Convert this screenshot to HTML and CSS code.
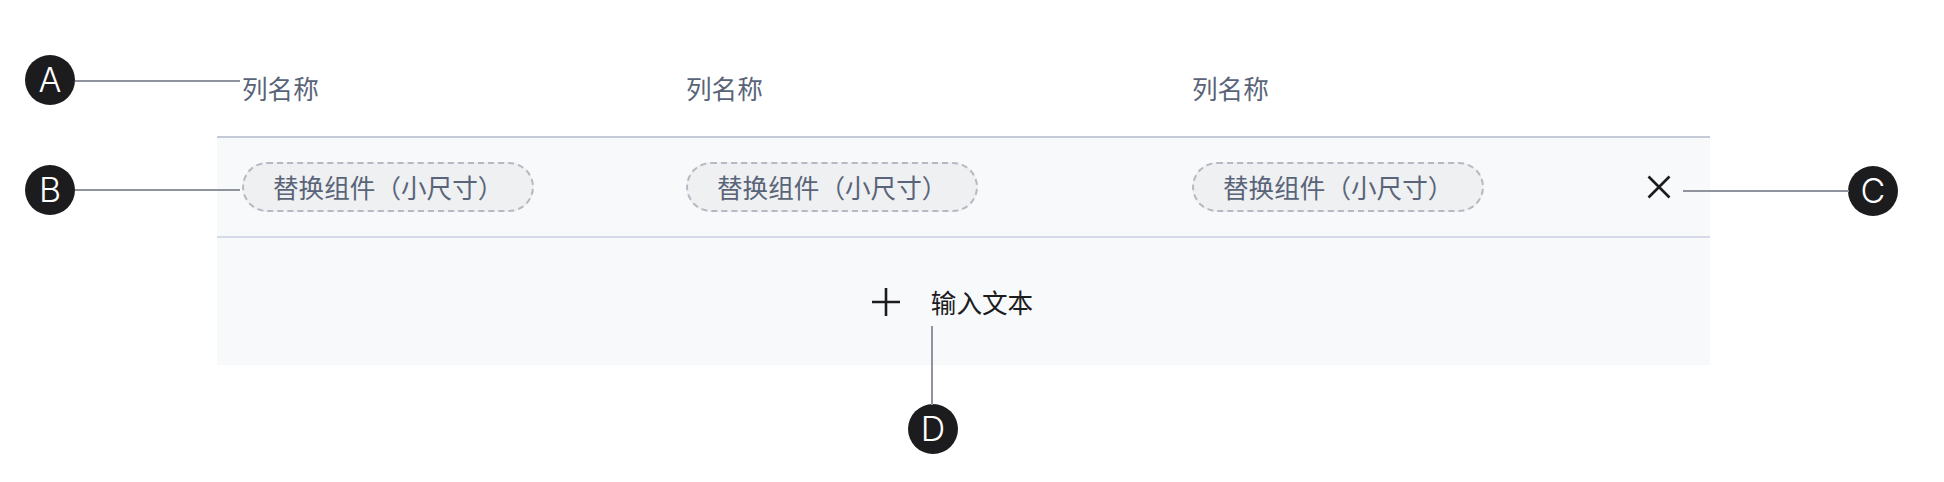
FILE: index.html
```html
<!DOCTYPE html>
<html lang="zh-CN">
<head>
<meta charset="utf-8">
<title>Table spec</title>
<link rel="stylesheet" href="styles.css">
</head>
<body>
<div class="stage">
  <div class="table">
    <div class="row head">
      <div class="cell">列名称</div>
      <div class="cell">列名称</div>
      <div class="cell">列名称</div>
      <div class="cell"></div>
    </div>
    <div class="row body">
      <div class="cell"><span class="pill">替换组件（小尺寸）</span></div>
      <div class="cell"><span class="pill">替换组件（小尺寸）</span></div>
      <div class="cell"><span class="pill">替换组件（小尺寸）</span></div>
      <div class="cell close">
        <svg width="24" height="24" viewBox="0 0 24 24"><path d="M1.5 1.5 L22.5 22.5 M22.5 1.5 L1.5 22.5" stroke="#1c1c1e" stroke-width="2.6" fill="none"/></svg>
      </div>
    </div>
    <div class="add">
      <svg class="plus" width="28" height="28" viewBox="0 0 28 28"><path d="M14 0 V28 M0 14 H28" stroke="#1c1c1e" stroke-width="2.6" fill="none"/></svg>
      <span class="add-text">输入文本</span>
    </div>
  </div>

  <div class="mark mark-a">A</div>
  <div class="line line-a"></div>
  <div class="mark mark-b">B</div>
  <div class="line line-b"></div>
  <div class="mark mark-c">C</div>
  <div class="line line-c"></div>
  <div class="mark mark-d">D</div>
  <div class="line line-d"></div>
</div>
</body>
</html>
```
FILE: styles.css
```css
html, body {
  margin: 0;
  padding: 0;
  background: #ffffff;
}
body {
  font-family: "Noto Sans CJK SC", "Noto Sans", sans-serif;
}
.stage {
  position: relative;
  width: 1944px;
  height: 482px;
  overflow: hidden;
}
.table {
  margin-left: 217px;
  width: 1493px;
}
.row {
  display: grid;
  grid-template-columns: 444px 506px 456px 62px;
  padding-left: 25px;
  box-sizing: border-box;
}
.head {
  height: 136px;
  align-items: end;
  padding-bottom: 30px;
}
.head .cell {
  font-size: 25.6px;
  line-height: 36px;
  color: #5a6479;
}
.body {
  background: #f8f9fb;
  border-top: 2px solid #c6cad7;
  border-bottom: 2px solid #d6d9e7;
  height: 102px;
  align-items: center;
}
.pill {
  display: inline-flex;
  align-items: center;
  box-sizing: border-box;
  height: 50px;
  padding: 0 29px;
  border: 2px dashed #b5b9c3;
  border-radius: 25px;
  background: #eef0f1;
  font-size: 25.6px;
  color: #5a6479;
  line-height: 1;
}
.close {
  display: flex;
  align-items: center;
  margin-left: -1px;
}
.close svg {
  display: block;
}
.add {
  height: 127px;
  background: #f8f9fb;
  display: flex;
  align-items: center;
  justify-content: center;
  padding-right: 22px;
  box-sizing: border-box;
}
.plus {
  display: block;
  margin-right: 31px;
}
.add-text {
  font-size: 25.6px;
  color: #1c1c1e;
  line-height: 1;
}
.mark {
  position: absolute;
  width: 50px;
  height: 50px;
  border-radius: 50%;
  background: #1c1c1e;
  color: #ffffff;
  font-family: Inter, "Liberation Sans", sans-serif;
  font-weight: 300;
  font-size: 34px;
  display: flex;
  align-items: center;
  justify-content: center;
  line-height: 1;
}
.mark-a { left: 25px; top: 55px; }
.mark-b { left: 25px; top: 165px; }
.mark-c { left: 1848px; top: 166px; }
.mark-d { left: 908px; top: 404px; }
.line {
  position: absolute;
  background: #8e939e;
}
.line-a { left: 75px; top: 80px; width: 165px; height: 2px; }
.line-b { left: 75px; top: 189px; width: 165px; height: 2px; }
.line-c { left: 1683px; top: 190px; width: 166px; height: 2px; }
.line-d { left: 931px; top: 326px; width: 2px; height: 79px; }
```
